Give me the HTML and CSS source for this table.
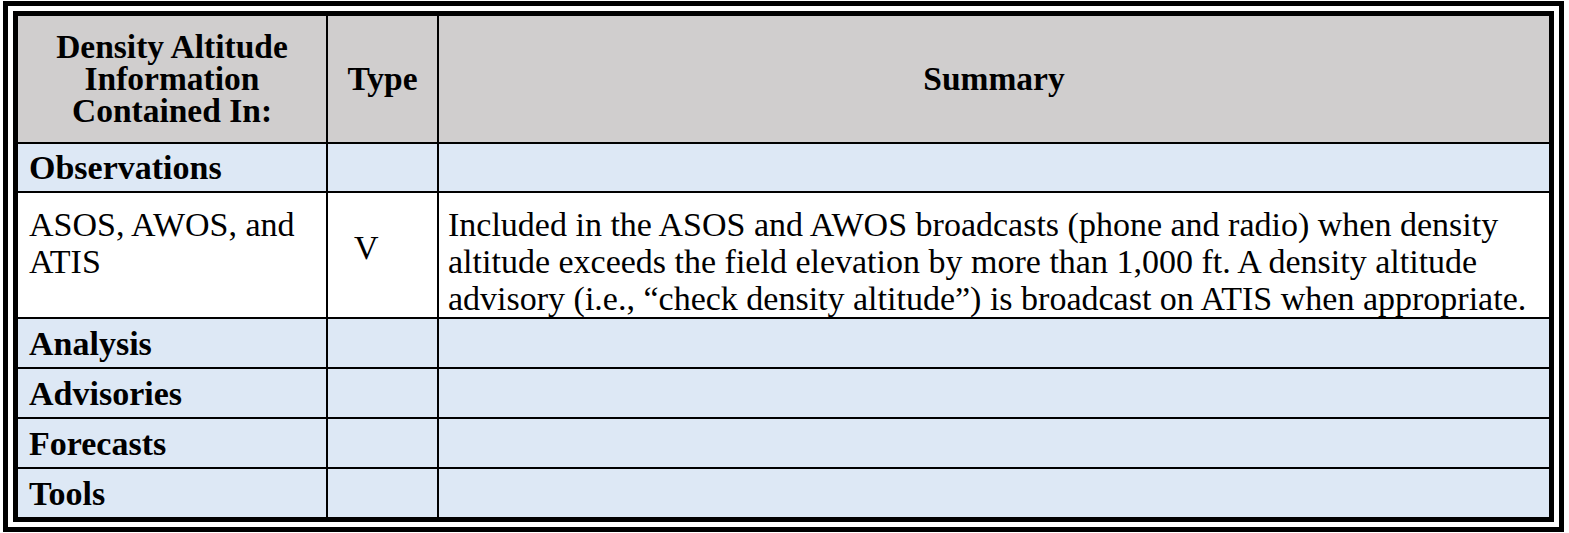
FILE: index.html
```html
<!DOCTYPE html>
<html lang="en">
<head>
<meta charset="utf-8">
<title>Density Altitude Information</title>
<link rel="stylesheet" href="styles.css">
</head>
<body>
<div class="frame">
  <table class="da-table">
    <colgroup>
      <col class="c1">
      <col class="c2">
      <col class="c3">
    </colgroup>
    <thead>
      <tr class="r-head">
        <th class="col1">Density Altitude<br>Information<br>Contained In:</th>
        <th class="col2">Type</th>
        <th class="col3">Summary</th>
      </tr>
    </thead>
    <tbody>
      <tr class="r-cat r-obs">
        <td class="col1 cat">Observations</td>
        <td class="col2"></td>
        <td class="col3"></td>
      </tr>
      <tr class="r-item">
        <td class="col1 item">ASOS, AWOS, and<br>ATIS</td>
        <td class="col2 type">V</td>
        <td class="col3 summary">Included in the ASOS and AWOS broadcasts (phone and radio) when density altitude exceeds the field elevation by more than 1,000 ft. A density altitude advisory (i.e., “check density altitude”) is broadcast on ATIS when appropriate.</td>
      </tr>
      <tr class="r-cat">
        <td class="col1 cat">Analysis</td>
        <td class="col2"></td>
        <td class="col3"></td>
      </tr>
      <tr class="r-cat">
        <td class="col1 cat">Advisories</td>
        <td class="col2"></td>
        <td class="col3"></td>
      </tr>
      <tr class="r-cat">
        <td class="col1 cat">Forecasts</td>
        <td class="col2"></td>
        <td class="col3"></td>
      </tr>
      <tr class="r-cat r-last">
        <td class="col1 cat">Tools</td>
        <td class="col2"></td>
        <td class="col3"></td>
      </tr>
    </tbody>
  </table>
</div>
</body>
</html>
```
FILE: styles.css
```css
html, body {
  margin: 0;
  padding: 0;
  background: #ffffff;
}

body {
  font-family: "Liberation Serif", "Times New Roman", serif;
  color: #000000;
}

.frame {
  display: inline-block;
  margin: 1px 0 0 3px;
  border: 5px solid #000000;
  padding: 5px;
  background: #ffffff;
}

.da-table {
  border: 5px solid #000000;
  border-collapse: separate;
  border-spacing: 0;
  table-layout: fixed;
  width: 1541px;
}

.c1 { width: 310px; }
.c2 { width: 111px; }
.c3 { width: 1110px; }

.da-table th,
.da-table td {
  box-sizing: border-box;
  padding: 0;
  border-right: 2px solid #000000;
  border-bottom: 2px solid #000000;
  vertical-align: middle;
  font-size: 34px;
}

.da-table th.col3,
.da-table td.col3 {
  border-right: none;
}

.da-table .r-head th {
  background: #d0cece;
  font-weight: bold;
  font-size: 33.5px;
  text-align: center;
  line-height: 32px;
  height: 128px;
}

.da-table .r-cat td {
  background: #dde8f5;
  height: 50px;
  line-height: 37px;
}

.da-table .r-obs td {
  height: 49px;
}

.da-table .r-last td {
  height: 48px;
  border-bottom: none;
}

.da-table td.cat {
  font-weight: bold;
  padding-left: 11px;
}

.da-table .r-item td {
  background: #ffffff;
  height: 126px;
  line-height: 37px;
}

.da-table td.item {
  vertical-align: top;
  padding-top: 13px;
  padding-left: 11px;
}

.da-table td.type {
  padding-left: 26px;
  padding-bottom: 16px;
}

.da-table td.summary {
  vertical-align: top;
  padding-top: 13px;
  padding-left: 9px;
  padding-right: 0;
}
```
